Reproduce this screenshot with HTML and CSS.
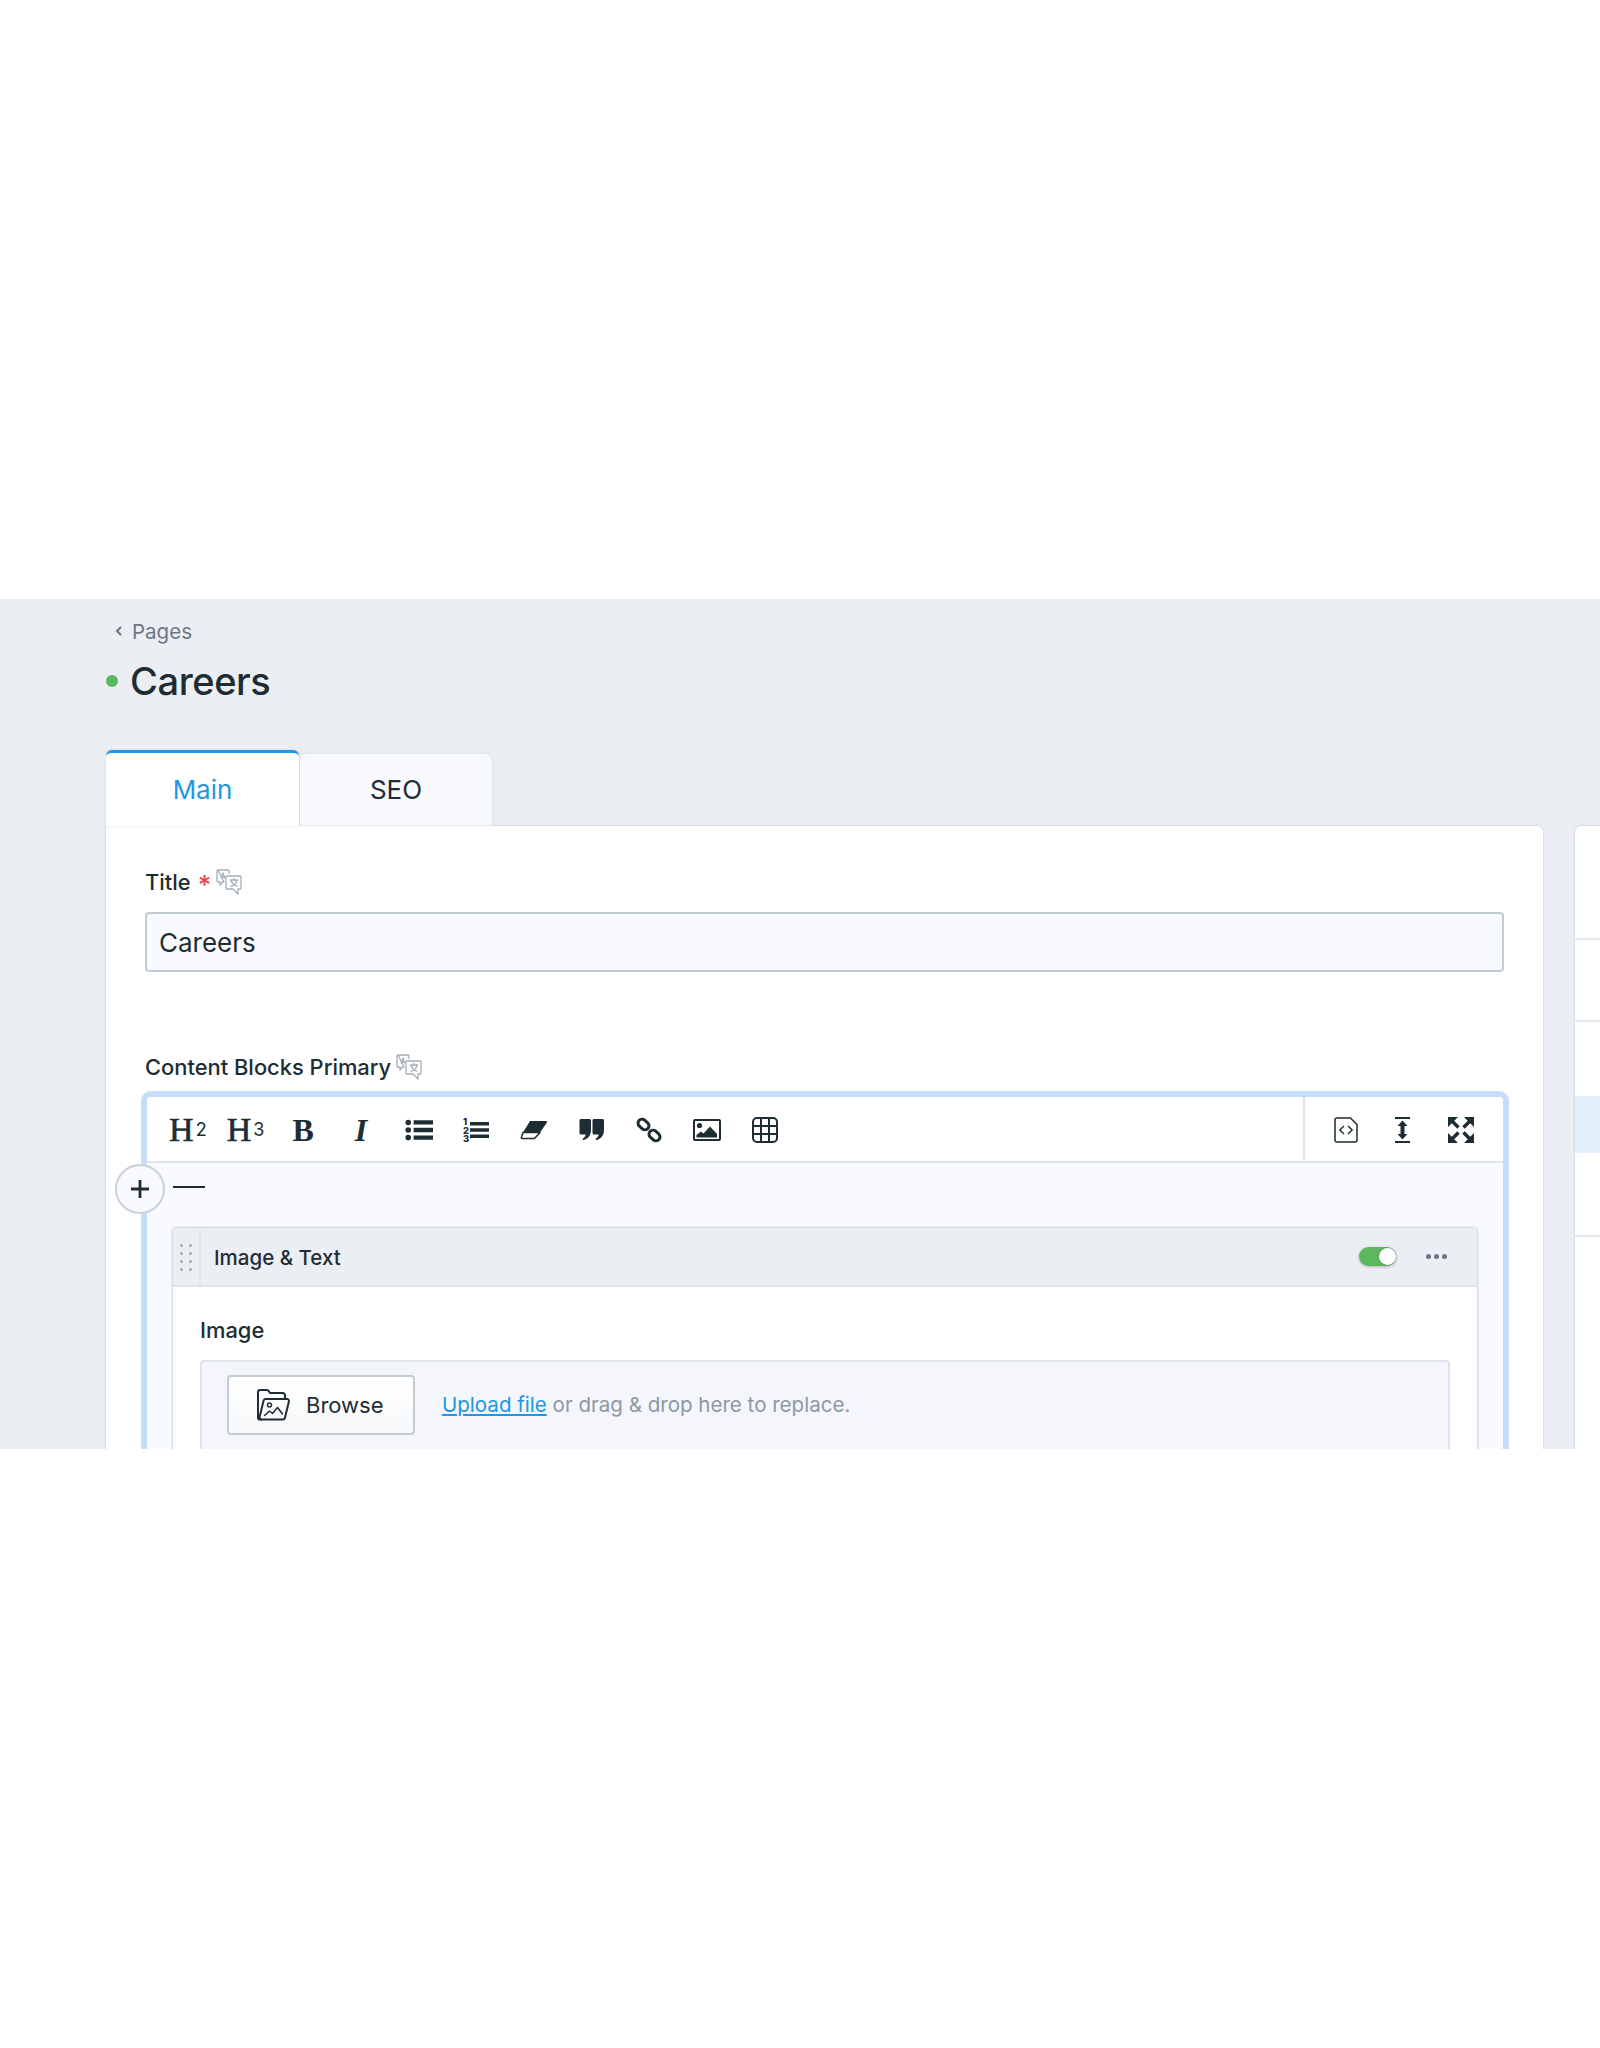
FILE: index.html
```html
<!DOCTYPE html>
<html lang="en">
<head>
<meta charset="utf-8">
<title>Careers</title>
<link rel="stylesheet" href="styles.css">
</head>
<body>
<main class="band">
  <a class="crumb"><svg class="crumb-chev" viewBox="0 0 8 12"><path d="M6 2 2 6l4 4"/></svg>Pages</a>
  <h1 class="title"><span class="dot"></span>Careers</h1>
  <div class="tabs">
    <div class="tab tab-active">Main</div>
    <div class="tab tab-plain">SEO</div>
  </div>
  <div class="columns">
    <section class="card">
      <div class="label">Title <span class="req">*</span>
        <svg class="tr" viewBox="0 0 26 27"><use href="#translate"/></svg>
      </div>
      <div class="input">Careers</div>
      <div class="label label-blocks">Content Blocks Primary
        <svg class="tr" viewBox="0 0 26 27"><use href="#translate"/></svg>
      </div>
      <div class="editor">
        <div class="toolbar">
          <div class="tools">
            <span class="tool serif heading">H<small>2</small></span>
            <span class="tool serif heading">H<small>3</small></span>
            <span class="tool serif bold">B</span>
            <span class="tool serif bold ital">I</span>
            <span class="tool"><svg viewBox="0 0 26 20"><circle cx="3" cy="3" r="2.6"/><circle cx="3" cy="10" r="2.6"/><circle cx="3" cy="17" r="2.6"/><path d="M8 1h18v4H8zM8 8h18v4H8zM8 15h18v4H8z"/></svg></span>
            <span class="tool"><svg viewBox="0 0 26 26"><path d="M7 5h19v3.4H7zM7 11.300h19v3.400H7zM7 17.600h19V21H7z"/><text x="0" y="8" class="num">1</text><text x="0" y="16.500" class="num">2</text><text x="0" y="25" class="num">3</text></svg></span>
            <span class="tool"><svg viewBox="0 0 28 20"><path d="M10 1h16c1.200 0 1.500.9.800 1.700L20 12.500H3z"/><path class="ln" d="M3 12.500h17l-5.500 6H2.500c-1.200 0-1.500-.9-.9-1.700z"/></svg></span>
            <span class="tool"><svg viewBox="1 0 28 26"><path d="M4 2h8.500c.8 0 1.500.7 1.500 1.500v9.500c0 5-2.500 8.500-7 10-1.200.3-1.800-1.200-.8-1.800 1.500-1 2.300-2.200 2.500-3.700H4c-.8 0-1.500-.7-1.500-1.500V3.500C2.500 2.700 3.200 2 4 2zM17 2h8.500c.8 0 1.500.7 1.500 1.500v9.500c0 5-2.500 8.500-7 10-1.200.3-1.800-1.200-.8-1.800 1.500-1 2.300-2.200 2.500-3.700H17c-.8 0-1.500-.7-1.500-1.500V3.500c0-.8.700-1.500 1.500-1.500z"/></svg></span>
            <span class="tool"><svg viewBox="0 0 26 26"><g class="ln ln3"><rect x="1.500" y="3.500" width="12" height="8" rx="4" transform="rotate(42 7.500 7.500)"/><rect x="12.500" y="14.500" width="12" height="8" rx="4" transform="rotate(42 18.500 18.500)"/></g></svg></span>
            <span class="tool"><svg viewBox="0 0 28 22"><rect class="ln ln2" x="1" y="1" width="26" height="20" rx="1"/><circle cx="6.500" cy="6.500" r="2.600"/><path d="M3.500 18.500v-2.500l4.500-3.500 2.500 2 6.500-7 7 7.500v3.500z"/></svg></span>
            <span class="tool"><svg viewBox="0 0 26 26"><rect class="ln ln2" x="1" y="1" width="24" height="24" rx="4"/><path class="ln ln2" d="M1 9h24M1 17h24M9 1v24M17 1v24"/></svg></span>
          </div>
          <div class="tools tools-right">
            <span class="tool"><svg viewBox="0 0 24 26"><path class="ln ln15" d="M3 1h13.500L23 7.500V23c0 1.100-.9 2-2 2H3c-1.100 0-2-.9-2-2V3c0-1.100.9-2 2-2z"/><path class="ln ln15" d="M9.500 9.500 5.800 13l3.700 3.500M14.500 9.500l3.700 3.500-3.700 3.500"/></svg></span>
            <span class="tool"><svg viewBox="0 0 16 26"><path d="M0 0h15v2H0zM0 24h15v2H0z"/><path d="M7.500 3.500 12.500 9H9.500v8h3l-5 5.500-5-5.500h3V9h-3z"/></svg></span>
            <span class="tool"><svg viewBox="0 0 26 26"><path d="M0 0h10L0 10zM26 0v10L16 0zM0 26V16l10 10zM26 26H16l10-10z"/><path class="ln butt shaft" d="M4 4l6.500 6.500M22 4l-6.500 6.500M4 22l6.500-6.500M22 22l-6.500-6.500"/></svg></span>
          </div>
        </div>
        <div class="body">
          <button class="plus" aria-label="Add"><svg viewBox="0 0 18 18"><path d="M7.600 0h2.800v7.600H18v2.800h-7.600V18H7.600v-7.600H0V7.600h7.600z"/></svg></button>
          <div class="dash"></div>
          <div class="block">
            <div class="block-head">
              <div class="grip"><i></i><i></i><i></i><i></i><i></i><i></i><i></i><i></i></div>
              <div class="block-name">Image &amp; Text</div>
              <div class="toggle"><span class="knob"></span></div>
              <div class="more"><i></i><i></i><i></i></div>
            </div>
            <div class="block-body">
              <div class="label">Image</div>
              <div class="upload">
                <button class="browse"><svg viewBox="0 0 33 32"><path class="ln ln2" d="M4.500 30.500H2.800A1.800 1.800 0 0 1 1 28.700V3.300C1 2 2 1 3.300 1h6.500c.7 0 1.300.3 1.700.8L13 4h12.500C27 4 28 5 28 6.500V10"/><path class="ln ln2" d="M8.500 10H30c1.300 0 2.200 1.200 1.900 2.400l-4 16.500c-.3 1-1.100 1.600-2.100 1.600H4.500c-1.300 0-2.200-1.200-1.900-2.400l3.900-16c.2-1.100 1-2.100 2-2.100z"/><circle class="ln ln15" cx="12.500" cy="16" r="2"/><path class="ln ln15" d="m7.500 26.500 5-4.500 3 2.500 5-6 5 6.500"/></svg>Browse</button>
                <span class="hint"><a class="link">Upload file</a> or drag &amp; drop here to replace.</span>
              </div>
            </div>
          </div>
        </div>
      </div>
    </section>
    <aside class="side">
      <div class="side-row side-a"></div>
      <div class="side-row side-b"></div>
      <div class="side-row side-c"></div>
      <div class="side-active"></div>
      <div class="side-row side-d"></div>
    </aside>
  </div>
  <svg class="defs" width="0" height="0"><defs><g id="translate" fill="none" stroke="#a3aeb8" stroke-width="1.300" stroke-linejoin="round"><path d="M2 1h10c.6 0 1 .4 1 1v3M8 13H6.500L4 16v-3H2c-.6 0-1-.4-1-1V2c0-.6.400-1 1-1z"/><path d="M5 9.500 7 4l2 5.500M5.700 8h2.600"/><path fill="#fff" d="M11 7h13c.6 0 1 .4 1 1v11c0 .6-.4 1-1 1h-2v5l-5-5h-6c-.6 0-1-.4-1-1V8c0-.6.400-1 1-1z"/><path d="M14 11h8M18 9v2M21 11c-.6 3.500-3 5.700-6.500 6.500M15 11.500c1 3 3.500 5 6.500 6"/></g></defs></svg>
</main>
</body>
</html>
```
FILE: styles.css
```css
* { box-sizing: border-box; }
html, body { margin: 0; background: #fff; }
body { font-family: Inter, "Liberation Sans", sans-serif; color: #1e2c33; padding-top: 599px; height: 2048px; }
.band { height: 850px; overflow: hidden; background: #ebeef3; padding: 19px 0 0 106px; }
.crumb { display: flex; align-items: center; height: 26px; padding-left: 9px; font-size: 20.500px; color: #6b7785; }
.crumb-chev { width: 8px; height: 12px; margin-right: 9px; fill: none; stroke: #6b7785; stroke-width: 2; }
.title { display: flex; align-items: center; margin: 14px 0 0; height: 46px; font-size: 38px; font-weight: 500; letter-spacing: -0.4px; }
.dot { width: 12px; height: 12px; border-radius: 50%; background: #5cb85f; margin-right: 12px; }
.tabs { display: flex; align-items: flex-end; gap: 1px; height: 76px; margin-top: 46px; }
.tab { width: 192px; height: 72px; display: flex; align-items: center; justify-content: center; background: #f9fafd; border-radius: 6px 6px 0 0; font-size: 26px; box-shadow: 0 0 2px rgba(170,180,195,.6); }
.tab-plain { padding-bottom: 2px; }
.tab-active { width: 193px; height: 76px; background: #fff; color: #2196e3; border-top: 3px solid #2196e3; position: relative; z-index: 1; }
.columns { display: flex; gap: 32px; align-items: flex-start; }
.card { width: 1437px; height: 700px; flex: none; background: #fff; border-radius: 0 6px 6px 6px; padding: 44px 39px 0; box-shadow: 0 0 2px rgba(150,165,185,.7); }
.label { display: flex; align-items: center; height: 24px; font-size: 21.900px; font-weight: 500; gap: 5px; }
.req { color: #e5484d; font-size: 26px; height: 24px; line-height: 30px; margin-left: 2px; }
.tr { width: 26px; height: 27px; }
.input { height: 60px; margin-top: 18px; padding-left: 12px; display: flex; align-items: center; font-size: 26px; background: #f9fafd; border: 2px solid #c2ccd5; border-radius: 4px; }
.label-blocks { margin-top: 83px; }
.editor { position: relative; margin: 12px -5px 0 -4px; border: 6px solid #c5dcfb; border-radius: 10px; background: #f9fafd; height: 700px; }
.toolbar { display: flex; justify-content: space-between; height: 66px; background: #fff; border-bottom: 2px solid #dfe4ea; border-radius: 4px 4px 0 0; }
.tools { display: flex; align-items: center; padding: 1px 0 0 12px; }
.tools-right { border-left: 2px solid #dfe4ea; padding: 1px 13px 0 12px; }
.tool { width: 57.700px; height: 60px; display: flex; align-items: center; justify-content: center; font-size: 32px; line-height: 1; }
.tool svg { height: 26px; width: 28px; fill: #1e2c33; }
.serif { font-family: "Liberation Serif", serif; font-weight: 700; }
.heading { font-size: 34px; font-weight: 400; -webkit-text-stroke: 0.6px #1e2c33; }
.tool small { font-family: Inter, sans-serif; font-size: 18px; font-weight: 400; margin-left: 2px; -webkit-text-stroke: 0; }
.ital { font-style: italic; }
.num { font-family: Inter, sans-serif; font-size: 9.500px; font-weight: 800; }
.ln { fill: none; stroke: #1e2c33; stroke-width: 1.500; stroke-linejoin: round; stroke-linecap: round; }
.ln2 { stroke-width: 2; }
.ln3 { stroke-width: 3; }
.ln15 { stroke-width: 1.500; }
.butt { stroke-linecap: butt; }
.shaft { stroke-width: 3.500; }
.body { position: relative; padding: 23px 26px 0; }
.plus { position: absolute; left: -32px; top: 1px; width: 50px; height: 50px; border-radius: 50%; background: #f9fafd; border: 2px solid #c8d1da; padding: 0; display: flex; align-items: center; justify-content: center; }
.plus svg { width: 18px; height: 18px; fill: #1e2c33; }
.dash { width: 32px; height: 2px; background: #1e2c33; margin-bottom: 40px; }
.block { background: #fff; border-radius: 4px 4px 0 0; box-shadow: 0 0 3px rgba(130,145,165,.8); height: 500px; }
.block-head { display: flex; align-items: center; height: 59px; padding-top: 2px; background: #ebeef3; border-bottom: 2px solid #dfe4ea; border-radius: 4px 4px 0 0; }
.grip { width: 28px; height: 100%; border-right: 2px solid #dfe4ea; display: grid; grid-template-columns: repeat(2, 3px); gap: 5px 6px; align-content: center; justify-content: center; }
.grip i { width: 3px; height: 3px; border-radius: 50%; background: #a3adb8; }
.block-name { flex: 1; padding-left: 13px; font-size: 20.500px; font-weight: 500; }
.toggle { position: relative; width: 37px; height: 19px; margin-top: -2px; border-radius: 10px; background: #5cb85f; box-shadow: 0 1px 3px rgba(0,0,0,.25); }
.knob { position: absolute; right: 0; top: 1px; width: 17px; height: 17px; border-radius: 50%; background: #fff; box-shadow: 0 0 2px rgba(0,0,0,.4); }
.more { display: flex; gap: 3px; margin: -3px 30px 0 30px; }
.more i { width: 5px; height: 5px; border-radius: 50%; background: #6b7785; }
.block-body { padding: 31px 27px 0; }
.upload { display: flex; align-items: center; gap: 27px; margin-top: 18px; padding: 13px 26px 39px 25px; background: #f4f6fb; border: 2px solid #dfe4ea; border-radius: 4px; }
.browse { display: flex; align-items: center; gap: 16px; width: 188px; height: 60px; padding: 0 0 0 28px; flex: none; font: 400 22px Inter, sans-serif; color: #1e2c33; background: linear-gradient(#fff, #f7f8fa); border: 2px solid #c2ccd5; border-radius: 4px; }
.browse svg { width: 33px; height: 32px; }
.hint { font-size: 20.550px; color: #8c98a4; margin-top: -2px; }
.link { color: #2196e3; text-decoration: underline; }
.side { flex: 1; height: 700px; background: #fff; border-radius: 6px 0 0 0; box-shadow: 0 0 2px rgba(150,165,185,.7); }
.side-row { border-bottom: 2px solid #e4e8ed; }
.side-a { height: 114px; }
.side-b { height: 82px; }
.side-c { height: 74px; border-bottom: 0; }
.side-active { height: 57px; background: #e4f1fd; }
.side-d { height: 84px; }
.defs { position: absolute; }
```
